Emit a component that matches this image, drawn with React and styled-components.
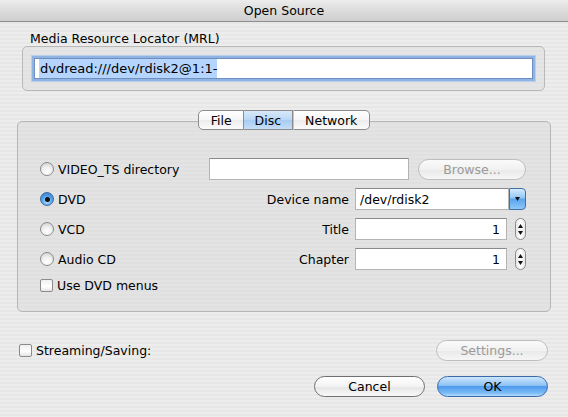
import React, { useState } from 'react';
import styled, { createGlobalStyle, css } from 'styled-components';

const GlobalStyle = createGlobalStyle`
  html, body {
    margin: 0;
    padding: 0;
  }
  body {
    width: 568px;
    height: 417px;
    overflow: hidden;
    font-family: 'DejaVu Sans', 'Liberation Sans', sans-serif;
    font-size: 12.5px;
    color: #000;
  }
`;

const Window = styled.div`
  width: 568px;
  height: 417px;
  display: flex;
  flex-direction: column;
  background: repeating-linear-gradient(
    to bottom,
    #ededed 0px,
    #ededed 2px,
    #e7e7e7 2px,
    #e7e7e7 4px
  );
  box-sizing: border-box;
`;

const TitleBar = styled.div`
  height: 22px;
  flex: none;
  display: flex;
  align-items: center;
  justify-content: center;
  background: linear-gradient(to bottom, #ececec 0%, #dcdcdc 50%, #cfcfcf 100%);
  border-bottom: 1px solid #8e8e8e;
  box-sizing: border-box;
  font-size: 12.5px;
`;

const Content = styled.div`
  display: flex;
  flex-direction: column;
  padding: 0 17px 0 17px;
`;

const GroupLabel = styled.div`
  padding: 10px 0 0 13px;
  height: 14px;
  line-height: 14px;
`;

const GroupBox = styled.div`
  margin: 0 6px 0 5px;
  padding: 11px 11px 11px 11px;
  border: 1px solid #b9b9b9;
  border-radius: 5px;
  background: rgba(220, 220, 220, 0.45);
`;

const TextField = styled.div`
  box-sizing: border-box;
  height: ${p => p.$h || 22}px;
  width: ${p => (p.$w ? `${p.$w}px` : 'auto')};
  flex: ${p => (p.$grow ? 1 : 'none')};
  background: #fff;
  border: 1px solid #b4b4b4;
  border-top-color: #8a8a8a;
  display: flex;
  align-items: center;
  justify-content: ${p => (p.$right ? 'flex-end' : 'flex-start')};
  padding: 0 6px 0 4px;
  white-space: nowrap;
  ${p => p.$focus && css`
    font-size: 13px;
    box-shadow: 0 0 0 2px #8fb4e3, 0 0 0 3px #b8cfee;
    border-color: #6e8fbf;
  `}
`;

const Selected = styled.span`
  background: #b5d5ff;
  padding: 2px 0 2px 1px;
`;

const TabsHeader = styled.div`
  display: flex;
  justify-content: center;
  margin-top: 19px;
  margin-bottom: -9px;
  position: relative;
  z-index: 1;
`;

const Tab = styled.div`
  height: 20px;
  box-sizing: border-box;
  padding: 0 ${p => p.$pad || 10}px;
  display: flex;
  align-items: center;
  border: 1px solid #8c8c8c;
  border-left-width: ${p => (p.$first ? 1 : 0)}px;
  background: ${p => p.$active
    ? 'linear-gradient(to bottom, #d9e9fa 0%, #b9d6f5 50%, #a6cbf2 51%, #c6def8 100%)'
    : 'linear-gradient(to bottom, #ffffff 0%, #f6f6f6 50%, #ececec 51%, #fbfbfb 100%)'};
  ${p => p.$first && css`border-radius: 5px 0 0 5px;`}
  ${p => p.$last && css`border-radius: 0 5px 5px 0;`}
  ${p => !p.$first && !p.$active && css`border-left: 1px solid #c4c4c4;`}
`;

const TabBox = styled.div`
  height: 191px;
  box-sizing: border-box;
  border: 1px solid #b5b5b5;
  border-radius: 5px;
  background: rgba(218, 218, 218, 0.5);
  padding: 32px 24px 0 22px;
  display: flex;
  flex-direction: column;
`;

const Row = styled.div`
  display: flex;
  align-items: center;
  height: ${p => p.$h || 30}px;
`;

const ChoiceCell = styled.label`
  width: 169px;
  flex: none;
  display: flex;
  align-items: center;
  gap: 4px;
`;

const Radio = styled.span`
  width: 14px;
  height: 14px;
  border-radius: 50%;
  box-sizing: border-box;
  flex: none;
  border: 1px solid #8b8b8b;
  display: flex;
  align-items: center;
  justify-content: center;
  background: ${p => p.$on
    ? 'radial-gradient(circle at 50% 70%, #bfe3ff 0%, #5aa6ec 45%, #2e74c9 100%)'
    : 'radial-gradient(circle at 50% 75%, #ffffff 0%, #f1f1f1 45%, #c9c9c9 100%)'};
  ${p => p.$on && css`border-color: #3c69a2;`}
  &::after {
    content: '';
    width: 5px;
    height: 5px;
    border-radius: 50%;
    background: #111;
    display: ${p => (p.$on ? 'block' : 'none')};
  }
`;

const Check = styled.span`
  width: 13px;
  height: 13px;
  box-sizing: border-box;
  flex: none;
  border: 1px solid #8b8b8b;
  border-radius: 2px;
  background: linear-gradient(to bottom, #f0f0f0 0%, #ffffff 60%, #e2e2e2 100%);
`;

const FieldLabel = styled.div`
  width: 140px;
  text-align: right;
  padding-right: 6px;
  flex: none;
`;

const Button = styled.div`
  box-sizing: border-box;
  width: ${p => p.$w || 111}px;
  height: 21px;
  border-radius: 11px;
  display: flex;
  align-items: center;
  justify-content: center;
  margin-left: ${p => p.$ml || 0}px;
  border: 1px solid ${p => (p.$disabled ? '#bdbdbd' : p.$default ? '#3a6aa8' : '#6f6f6f')};
  color: ${p => (p.$disabled ? '#9a9a9a' : '#000')};
  background: ${p => p.$default
    ? 'linear-gradient(to bottom, #cde6fd 0%, #8cc2f5 45%, #4e9aec 50%, #7dbdf6 85%, #b4dcfc 100%)'
    : p.$disabled
      ? 'linear-gradient(to bottom, #fafafa 0%, #f1f1f1 50%, #e9e9e9 51%, #f6f6f6 100%)'
      : 'linear-gradient(to bottom, #ffffff 0%, #f3f3f3 50%, #e5e5e5 51%, #f9f9f9 100%)'};
`;

const ComboBox = styled.div`
  display: flex;
  width: 173px;
  height: 22px;
`;

const ComboArrow = styled.div`
  width: 17px;
  flex: none;
  box-sizing: border-box;
  border: 1px solid #4470a8;
  border-radius: 0 4px 4px 0;
  background: linear-gradient(to bottom, #d5ebfe 0%, #92c7f6 45%, #5ba3ee 50%, #8cc8f8 100%);
  display: flex;
  align-items: center;
  justify-content: center;
`;

const Stepper = styled.div`
  width: 13px;
  height: 22px;
  margin-left: 8px;
  box-sizing: border-box;
  border: 1px solid #8a8a8a;
  border-radius: 6px;
  background: linear-gradient(to right, #e9e9e9, #ffffff 50%, #e9e9e9);
  display: flex;
  flex-direction: column;
  align-items: center;
  justify-content: space-around;
  padding: 3px 0;
`;

const Footer = styled.div`
  display: flex;
  flex-direction: column;
  padding: 28px 20px 0 19px;
`;

const FooterRow = styled.div`
  display: flex;
  align-items: center;
  justify-content: ${p => (p.$end ? 'flex-end' : 'space-between')};
  height: 21px;
  margin-top: ${p => p.$mt || 0}px;
`;

const CheckLabel = styled.label`
  display: flex;
  align-items: center;
  gap: 4px;
`;

const Triangle = ({ up }) => (
  <svg width="5" height="4" viewBox="0 0 5 4">
    <path d={up ? 'M0 4 L2.5 0 L5 4 Z' : 'M0 0 L2.5 4 L5 0 Z'} fill="#111" />
  </svg>
);

export default function App() {
  const [mode, setMode] = useState('dvd');
  const choices = [
    { id: 'ts', label: 'VIDEO_TS directory' },
    { id: 'dvd', label: 'DVD' },
    { id: 'vcd', label: 'VCD' },
    { id: 'cd', label: 'Audio CD' },
  ];

  const right = {
    ts: (
      <>
        <TextField $w={200} />
        <Button $w={110} $ml={9} $disabled>Browse...</Button>
      </>
    ),
    dvd: (
      <>
        <FieldLabel>Device name</FieldLabel>
        <ComboBox>
          <TextField $grow>/dev/rdisk2</TextField>
          <ComboArrow><Triangle /></ComboArrow>
        </ComboBox>
      </>
    ),
    vcd: (
      <>
        <FieldLabel>Title</FieldLabel>
        <TextField $w={152} $right>1</TextField>
        <Stepper><Triangle up /><Triangle /></Stepper>
      </>
    ),
    cd: (
      <>
        <FieldLabel>Chapter</FieldLabel>
        <TextField $w={152} $right>1</TextField>
        <Stepper><Triangle up /><Triangle /></Stepper>
      </>
    ),
  };

  return (
    <>
      <GlobalStyle />
      <Window>
        <TitleBar>Open Source</TitleBar>
        <Content>
          <GroupLabel>Media Resource Locator (MRL)</GroupLabel>
          <GroupBox>
            <TextField $h={21} $focus>
              <Selected>dvdread:///dev/rdisk2@1:1-</Selected>
            </TextField>
          </GroupBox>

          <TabsHeader>
            <Tab $first $pad={11.5}>File</Tab>
            <Tab $active $pad={10.5}>Disc</Tab>
            <Tab $last $pad={11.5}>Network</Tab>
          </TabsHeader>
          <TabBox>
            {choices.map(c => (
              <Row key={c.id}>
                <ChoiceCell onClick={() => setMode(c.id)}>
                  <Radio $on={mode === c.id} />
                  {c.label}
                </ChoiceCell>
                {right[c.id]}
              </Row>
            ))}
            <Row $h={22}>
              <ChoiceCell>
                <Check />
                Use DVD menus
              </ChoiceCell>
            </Row>
          </TabBox>
        </Content>

        <Footer>
          <FooterRow>
            <CheckLabel>
              <Check />
              Streaming/Saving:
            </CheckLabel>
            <Button $w={112} $disabled>Settings...</Button>
          </FooterRow>
          <FooterRow $end $mt={15}>
            <Button>Cancel</Button>
            <Button $default $ml={12}>OK</Button>
          </FooterRow>
        </Footer>
      </Window>
    </>
  );
}
